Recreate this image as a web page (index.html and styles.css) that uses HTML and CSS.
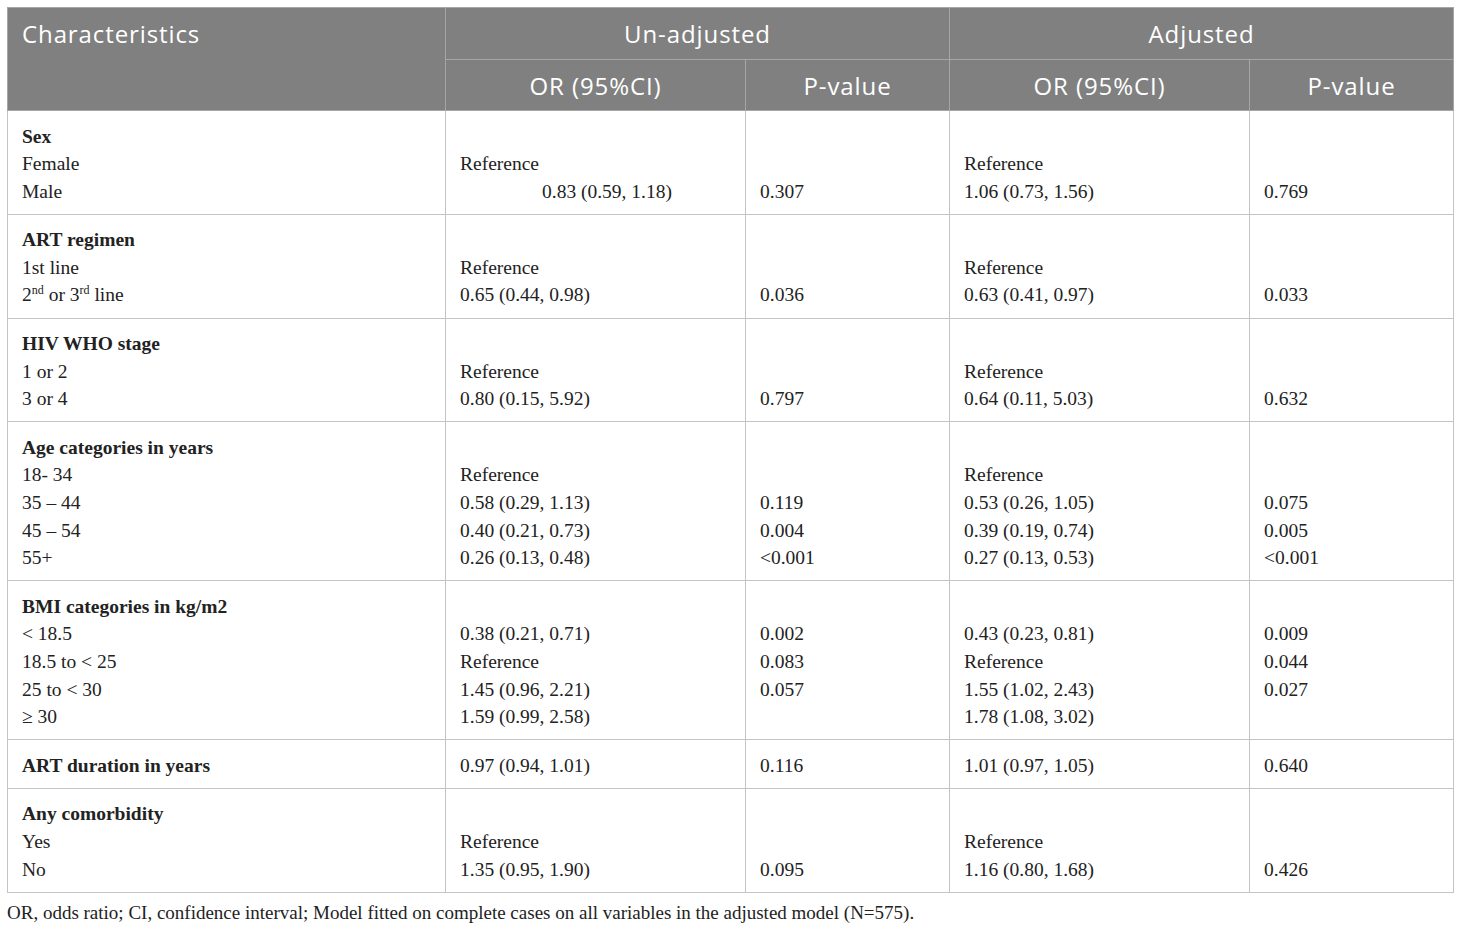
FILE: index.html
```html
<!DOCTYPE html>
<html lang="en">
<head>
<meta charset="utf-8">
<title>Table</title>
<link rel="stylesheet" href="styles.css">
</head>
<body>
<div class="wrap">
<table class="tbl">
  <colgroup>
    <col class="c1"><col class="c2"><col class="c3"><col class="c2"><col class="c3">
  </colgroup>
  <thead>
    <tr class="h1">
      <th rowspan="2" class="left">Characteristics</th>
      <th colspan="2">Un-adjusted</th>
      <th colspan="2">Adjusted</th>
    </tr>
    <tr class="h2">
      <th>OR (95%CI)</th>
      <th>P-value</th>
      <th>OR (95%CI)</th>
      <th>P-value</th>
    </tr>
  </thead>
  <tbody>
    <tr>
      <td><b>Sex</b><br>Female<br>Male</td>
      <td><br>Reference<br><span class="indent">0.83 (0.59, 1.18)</span></td>
      <td><br><br>0.307</td>
      <td><br>Reference<br>1.06 (0.73, 1.56)</td>
      <td><br><br>0.769</td>
    </tr>
    <tr>
      <td><b>ART regimen</b><br>1st line<br>2<sup>nd</sup> or 3<sup>rd</sup> line</td>
      <td><br>Reference<br>0.65 (0.44, 0.98)</td>
      <td><br><br>0.036</td>
      <td><br>Reference<br>0.63 (0.41, 0.97)</td>
      <td><br><br>0.033</td>
    </tr>
    <tr>
      <td><b>HIV WHO stage</b><br>1 or 2<br>3 or 4</td>
      <td><br>Reference<br>0.80 (0.15, 5.92)</td>
      <td><br><br>0.797</td>
      <td><br>Reference<br>0.64 (0.11, 5.03)</td>
      <td><br><br>0.632</td>
    </tr>
    <tr>
      <td><b>Age categories in years</b><br>18- 34<br>35 – 44<br>45 – 54<br>55+</td>
      <td><br>Reference<br>0.58 (0.29, 1.13)<br>0.40 (0.21, 0.73)<br>0.26 (0.13, 0.48)</td>
      <td><br><br>0.119<br>0.004<br>&lt;0.001</td>
      <td><br>Reference<br>0.53 (0.26, 1.05)<br>0.39 (0.19, 0.74)<br>0.27 (0.13, 0.53)</td>
      <td><br><br>0.075<br>0.005<br>&lt;0.001</td>
    </tr>
    <tr>
      <td><b>BMI categories in kg/m2</b><br>&lt; 18.5<br>18.5 to &lt; 25<br>25 to &lt; 30<br>≥ 30</td>
      <td><br>0.38 (0.21, 0.71)<br>Reference<br>1.45 (0.96, 2.21)<br>1.59 (0.99, 2.58)</td>
      <td><br>0.002<br>0.083<br>0.057<br>&nbsp;</td>
      <td><br>0.43 (0.23, 0.81)<br>Reference<br>1.55 (1.02, 2.43)<br>1.78 (1.08, 3.02)</td>
      <td><br>0.009<br>0.044<br>0.027<br>&nbsp;</td>
    </tr>
    <tr>
      <td><b>ART duration in years</b></td>
      <td>0.97 (0.94, 1.01)</td>
      <td>0.116</td>
      <td>1.01 (0.97, 1.05)</td>
      <td>0.640</td>
    </tr>
    <tr>
      <td><b>Any comorbidity</b><br>Yes<br>No</td>
      <td><br>Reference<br>1.35 (0.95, 1.90)</td>
      <td><br><br>0.095</td>
      <td><br>Reference<br>1.16 (0.80, 1.68)</td>
      <td><br><br>0.426</td>
    </tr>
  </tbody>
</table>
<p class="note">OR, odds ratio; CI, confidence interval; Model fitted on complete cases on all variables in the adjusted model (N=575).</p>
</div>
</body>
</html>
```

FILE: styles.css
```css
html, body {
  margin: 0;
  padding: 0;
  background: #ffffff;
}
.wrap {
  padding: 7px 7px 0 7px;
}
.tbl {
  border-collapse: collapse;
  table-layout: fixed;
  width: 1446px;
  font-family: "Liberation Serif", "Times New Roman", serif;
  font-size: 19.5px;
  color: #222222;
}
.c1 { width: 438px; }
.c2 { width: 300px; }
.c3 { width: 204px; }
.tbl th {
  background: #808080;
  color: #ffffff;
  font-family: "Open Sans", "Noto Sans", sans-serif;
  font-weight: 400;
  font-size: 24px;
  letter-spacing: 0.9px;
  text-align: center;
  vertical-align: middle;
  border: 1px solid #a6a6a6;
  padding: 0 14px;
}
.tbl .h1 th { height: 51px; }
.tbl .h2 th { height: 50px; }
.tbl th.left {
  text-align: left;
  vertical-align: top;
  padding-top: 9px;
}
.tbl td {
  border: 1px solid #c4c4c4;
  vertical-align: top;
  line-height: 27.6px;
  padding: 11.5px 14px 8.5px 14px;
  text-align: left;
}
.tbl td b { font-weight: 700; }
.tbl sup {
  font-size: 12px;
  line-height: 0;
  vertical-align: 7px;
}
.indent { padding-left: 82px; }
.note {
  margin: 9px 0 0 0;
  font-family: "Liberation Serif", "Times New Roman", serif;
  font-size: 19px;
  color: #222222;
}
```
